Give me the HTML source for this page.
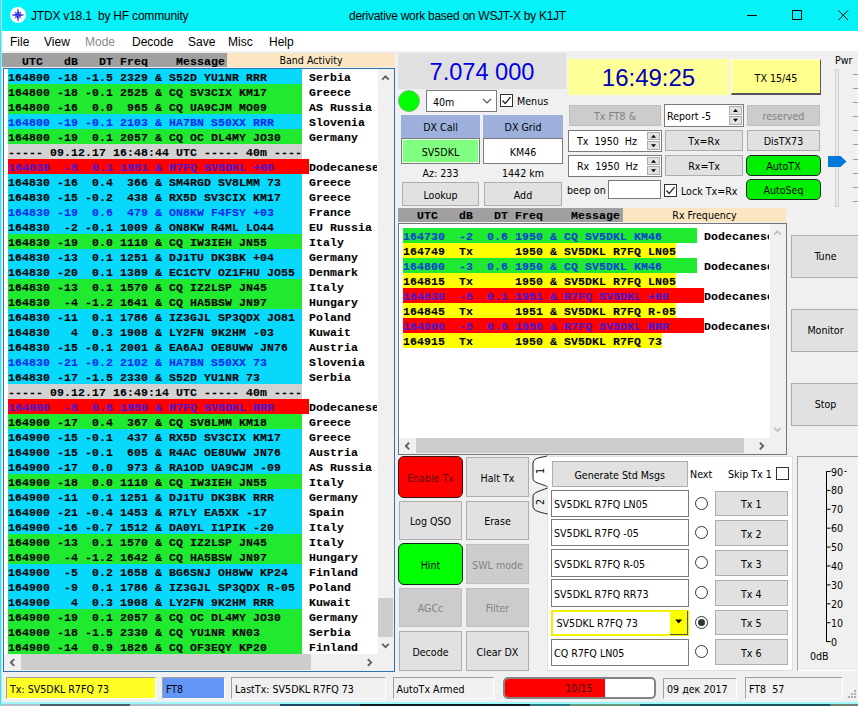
<!DOCTYPE html><html><head><meta charset="utf-8"><title>JTDX v18.1 by HF community</title><style>
*{box-sizing:border-box}
html,body{margin:0;padding:0}
body{width:858px;height:706px;overflow:hidden;position:relative;background:#8fb6c2;font-family:"DejaVu Sans Condensed","Liberation Sans",sans-serif;font-size:10.6px;color:#000}
.a{position:absolute}
.win{left:2px;top:0;width:860px;height:704px;background:#f0f0f0;border-bottom:2px solid #9cf8fa}
.tb{left:1px;top:0;width:857px;height:31px;background:#04f2f8}
.seg{font-family:"Liberation Sans",sans-serif;font-size:12px;white-space:pre}
.mono{font-family:"Liberation Mono","DejaVu Sans Mono",monospace;font-weight:bold;font-size:11.5px;letter-spacing:0.1px;white-space:pre;line-height:15px;-webkit-text-stroke:0.1px}
.mono .r{position:absolute;height:15px;line-height:17px;overflow:hidden}
.btn{background:#e1e1e1;border:1px solid #adadad;text-align:center;white-space:pre;padding-top:2px}
.dis{background:#cccccc;border:1px solid #bfbfbf;color:#838383;text-align:center;white-space:pre;padding-top:2px}
.ed{background:#fff;border:1px solid #7a7a7a;white-space:pre;padding-top:1.5px}
.cbt{padding-top:2px;white-space:pre}
.c{display:flex;align-items:center;justify-content:center}
.l{display:flex;align-items:center}
.cb{background:#fff;border:1px solid #333;width:13px;height:13px}
.rad{width:13px;height:13px;border:1px solid #333;border-radius:50%;background:#fff}
.sunk{border:1px solid;border-color:#a0a0a0 #fff #fff #a0a0a0;white-space:pre;padding-top:2px}
.t{white-space:pre}
</style></head><body>
<div class="a" style="left:0px;top:704px;width:40px;height:2px;background:#b4c0cc"></div>
<div class="a" style="left:40px;top:704px;width:90px;height:2px;background:#4a5a6a"></div>
<div class="a" style="left:130px;top:704px;width:150px;height:2px;background:#b0bcc8"></div>
<div class="a" style="left:280px;top:704px;width:80px;height:2px;background:#204868"></div>
<div class="a" style="left:360px;top:704px;width:170px;height:2px;background:#101820"></div>
<div class="a" style="left:530px;top:704px;width:40px;height:2px;background:#2a7a80"></div>
<div class="a" style="left:570px;top:704px;width:70px;height:2px;background:#6a9a80"></div>
<div class="a" style="left:640px;top:704px;width:190px;height:2px;background:#1a5060"></div>
<div class="a" style="left:830px;top:704px;width:28px;height:2px;background:#708070"></div>
<div class="a win"></div>
<div class="a tb"></div>
<svg class="a" style="left:10px;top:6.7px" width="16" height="16" viewBox="0 0 16 16"><circle cx="8" cy="8" r="8" fill="#fff"/><path d="M4.3 4.6 L8 6.2 L11.7 4.6 L9.8 8 L11.7 11.4 L8 9.8 L4.3 11.4 L6.2 8 Z" fill="#4a4af2"/><path d="M8 1.3 L9.3 6.7 L14.8 8 L9.3 9.3 L8 15 L6.7 9.3 L1.2 8 L6.7 6.7 Z" fill="#2424d6"/><path d="M8 1.3 L8 8 L6.7 6.7 Z M14.8 8 L8 8 L9.3 6.7 Z M8 15 L8 8 L9.3 9.3 Z M1.2 8 L8 8 L6.7 9.3 Z" fill="#5a5af6"/></svg>
<div class="a seg" style="left:31px;top:9px;line-height:14px;letter-spacing:-0.2px">JTDX v18.1  by HF community</div>
<div class="a seg" style="left:349px;top:9px;line-height:14px;letter-spacing:-0.27px">derivative work based on WSJT-X by K1JT</div>
<svg class="a" style="left:740px;top:0" width="118" height="31" viewBox="0 0 118 31"><g stroke="#000" stroke-width="1" fill="none"><path d="M7 15.5 H17"/><rect x="52.5" y="10.5" width="9" height="9"/><path d="M98.5 10.5 L108 20 M108 10.5 L98.5 20"/></g></svg>
<div class="a" style="left:2px;top:31px;width:856px;height:20px;background:#fff"></div>
<div class="a seg" style="left:10px;top:35px;line-height:14px;color:#000">File</div>
<div class="a seg" style="left:44px;top:35px;line-height:14px;color:#000">View</div>
<div class="a seg" style="left:85px;top:35px;line-height:14px;color:#8a8a8a">Mode</div>
<div class="a seg" style="left:132px;top:35px;line-height:14px;color:#000">Decode</div>
<div class="a seg" style="left:188px;top:35px;line-height:14px;color:#000">Save</div>
<div class="a seg" style="left:228px;top:35px;line-height:14px;color:#000">Misc</div>
<div class="a seg" style="left:269px;top:35px;line-height:14px;color:#000">Help</div>
<div class="a" style="left:2px;top:53px;width:225px;height:14px;background:#a0a0a0"></div>
<div class="a c" style="left:227px;top:53px;width:168px;height:14px;background:#fce6c2">Band Activity</div>
<div class="a mono" style="left:8px;top:53px;height:14px;line-height:17px;overflow:hidden">  UTC   dB   DT Freq    Message</div>
<div class="a" style="left:3px;top:68px;width:392px;height:604px;background:#fff;border:1px solid #2f72b4"></div>
<div class="a mono" style="left:8px;top:69px;width:369px;height:585px;overflow:hidden">
<div class="r" style="left:0;top:0px;width:294px;background:#08d8fc;color:#000">164800 -18 -1.5 2329 &amp; S52D YU1NR RRR</div>
<div class="r" style="left:301px;top:0px">Serbia</div>
<div class="r" style="left:0;top:15px;width:294px;background:#20ea30;color:#000">164800 -18 -0.1 2525 &amp; CQ SV3CIX KM17</div>
<div class="r" style="left:301px;top:15px">Greece</div>
<div class="r" style="left:0;top:30px;width:294px;background:#20ea30;color:#000">164800 -16  0.0  965 &amp; CQ UA9CJM MO09</div>
<div class="r" style="left:301px;top:30px">AS Russia</div>
<div class="r" style="left:0;top:45px;width:294px;background:#08d8fc;color:#0a28f0">164800 -19 -0.1 2103 &amp; HA7BN S50XX RRR</div>
<div class="r" style="left:301px;top:45px">Slovenia</div>
<div class="r" style="left:0;top:60px;width:294px;background:#20ea30;color:#000">164800 -19  0.1 2057 &amp; CQ OC DL4MY JO30</div>
<div class="r" style="left:301px;top:60px">Germany</div>
<div class="r" style="left:0;top:75px;width:294px;background:#d2d2d2;color:#000">----- 09.12.17 16:48:44 UTC ----- 40m ----</div>
<div class="r" style="left:0;top:90px;width:301px;background:#ff0000;color:#4818d2">164830  -5  0.1 1951 &amp; R7FQ SV5DKL +00</div>
<div class="r" style="left:301px;top:90px">Dodecanese</div>
<div class="r" style="left:0;top:105px;width:294px;background:#08d8fc;color:#000">164830 -16  0.4  366 &amp; SM4RGD SV8LMM 73</div>
<div class="r" style="left:301px;top:105px">Greece</div>
<div class="r" style="left:0;top:120px;width:294px;background:#08d8fc;color:#000">164830 -15 -0.2  438 &amp; RX5D SV3CIX KM17</div>
<div class="r" style="left:301px;top:120px">Greece</div>
<div class="r" style="left:0;top:135px;width:294px;background:#08d8fc;color:#0a28f0">164830 -19  0.6  479 &amp; ON8KW F4FSY +03</div>
<div class="r" style="left:301px;top:135px">France</div>
<div class="r" style="left:0;top:150px;width:294px;background:#08d8fc;color:#000">164830  -2 -0.1 1009 &amp; ON8KW R4ML LO44</div>
<div class="r" style="left:301px;top:150px">EU Russia</div>
<div class="r" style="left:0;top:165px;width:294px;background:#20ea30;color:#000">164830 -19  0.0 1110 &amp; CQ IW3IEH JN55</div>
<div class="r" style="left:301px;top:165px">Italy</div>
<div class="r" style="left:0;top:180px;width:294px;background:#08d8fc;color:#000">164830 -13  0.1 1251 &amp; DJ1TU DK3BK +04</div>
<div class="r" style="left:301px;top:180px">Germany</div>
<div class="r" style="left:0;top:195px;width:294px;background:#08d8fc;color:#000">164830 -20  0.1 1389 &amp; EC1CTV OZ1FHU JO55</div>
<div class="r" style="left:301px;top:195px">Denmark</div>
<div class="r" style="left:0;top:210px;width:294px;background:#20ea30;color:#000">164830 -13  0.1 1570 &amp; CQ IZ2LSP JN45</div>
<div class="r" style="left:301px;top:210px">Italy</div>
<div class="r" style="left:0;top:225px;width:294px;background:#20ea30;color:#000">164830  -4 -1.2 1641 &amp; CQ HA5BSW JN97</div>
<div class="r" style="left:301px;top:225px">Hungary</div>
<div class="r" style="left:0;top:240px;width:294px;background:#08d8fc;color:#000">164830 -11  0.1 1786 &amp; IZ3GJL SP3QDX JO81</div>
<div class="r" style="left:301px;top:240px">Poland</div>
<div class="r" style="left:0;top:255px;width:294px;background:#08d8fc;color:#000">164830   4  0.3 1908 &amp; LY2FN 9K2HM -03</div>
<div class="r" style="left:301px;top:255px">Kuwait</div>
<div class="r" style="left:0;top:270px;width:294px;background:#08d8fc;color:#000">164830 -15 -0.1 2001 &amp; EA6AJ OE8UWW JN76</div>
<div class="r" style="left:301px;top:270px">Austria</div>
<div class="r" style="left:0;top:285px;width:294px;background:#08d8fc;color:#0a28f0">164830 -21 -0.2 2102 &amp; HA7BN S50XX 73</div>
<div class="r" style="left:301px;top:285px">Slovenia</div>
<div class="r" style="left:0;top:300px;width:294px;background:#08d8fc;color:#000">164830 -17 -1.5 2330 &amp; S52D YU1NR 73</div>
<div class="r" style="left:301px;top:300px">Serbia</div>
<div class="r" style="left:0;top:315px;width:294px;background:#d2d2d2;color:#000">----- 09.12.17 16:49:14 UTC ----- 40m ----</div>
<div class="r" style="left:0;top:330px;width:301px;background:#ff0000;color:#4818d2">164900  -5  0.6 1950 &amp; R7FQ SV5DKL RRR</div>
<div class="r" style="left:301px;top:330px">Dodecanese</div>
<div class="r" style="left:0;top:345px;width:294px;background:#20ea30;color:#000">164900 -17  0.4  367 &amp; CQ SV8LMM KM18</div>
<div class="r" style="left:301px;top:345px">Greece</div>
<div class="r" style="left:0;top:360px;width:294px;background:#08d8fc;color:#000">164900 -15 -0.1  437 &amp; RX5D SV3CIX KM17</div>
<div class="r" style="left:301px;top:360px">Greece</div>
<div class="r" style="left:0;top:375px;width:294px;background:#08d8fc;color:#000">164900 -15 -0.1  605 &amp; R4AC OE8UWW JN76</div>
<div class="r" style="left:301px;top:375px">Austria</div>
<div class="r" style="left:0;top:390px;width:294px;background:#08d8fc;color:#000">164900 -17  0.0  973 &amp; RA1OD UA9CJM -09</div>
<div class="r" style="left:301px;top:390px">AS Russia</div>
<div class="r" style="left:0;top:405px;width:294px;background:#20ea30;color:#000">164900 -18  0.0 1110 &amp; CQ IW3IEH JN55</div>
<div class="r" style="left:301px;top:405px">Italy</div>
<div class="r" style="left:0;top:420px;width:294px;background:#08d8fc;color:#000">164900 -11  0.1 1251 &amp; DJ1TU DK3BK RRR</div>
<div class="r" style="left:301px;top:420px">Germany</div>
<div class="r" style="left:0;top:435px;width:294px;background:#08d8fc;color:#000">164900 -21 -0.4 1453 &amp; R7LY EA5XK -17</div>
<div class="r" style="left:301px;top:435px">Spain</div>
<div class="r" style="left:0;top:450px;width:294px;background:#08d8fc;color:#000">164900 -16 -0.7 1512 &amp; DA0YL I1PIK -20</div>
<div class="r" style="left:301px;top:450px">Italy</div>
<div class="r" style="left:0;top:465px;width:294px;background:#20ea30;color:#000">164900 -13  0.1 1570 &amp; CQ IZ2LSP JN45</div>
<div class="r" style="left:301px;top:465px">Italy</div>
<div class="r" style="left:0;top:480px;width:294px;background:#20ea30;color:#000">164900  -4 -1.2 1642 &amp; CQ HA5BSW JN97</div>
<div class="r" style="left:301px;top:480px">Hungary</div>
<div class="r" style="left:0;top:495px;width:294px;background:#08d8fc;color:#000">164900  -5  0.2 1658 &amp; BG6SNJ OH8WW KP24</div>
<div class="r" style="left:301px;top:495px">Finland</div>
<div class="r" style="left:0;top:510px;width:294px;background:#08d8fc;color:#000">164900  -9  0.1 1786 &amp; IZ3GJL SP3QDX R-05</div>
<div class="r" style="left:301px;top:510px">Poland</div>
<div class="r" style="left:0;top:525px;width:294px;background:#08d8fc;color:#000">164900   4  0.3 1908 &amp; LY2FN 9K2HM RRR</div>
<div class="r" style="left:301px;top:525px">Kuwait</div>
<div class="r" style="left:0;top:540px;width:294px;background:#20ea30;color:#000">164900 -19  0.1 2057 &amp; CQ OC DL4MY JO30</div>
<div class="r" style="left:301px;top:540px">Germany</div>
<div class="r" style="left:0;top:555px;width:294px;background:#20ea30;color:#000">164900 -18 -1.5 2330 &amp; CQ YU1NR KN03</div>
<div class="r" style="left:301px;top:555px">Serbia</div>
<div class="r" style="left:0;top:570px;width:294px;background:#20ea30;color:#000">164900 -14  0.9 1826 &amp; CQ OF3EQY KP20</div>
<div class="r" style="left:301px;top:570px">Finland</div>
</div>
<div class="a" style="left:378px;top:69px;width:16px;height:602px;background:#f0f0f0"></div>
<div class="a" style="left:4px;top:654px;width:390px;height:17px;background:#f0f0f0"></div>
<div class="a" style="left:378px;top:598px;width:15px;height:39px;background:#cdcdcd"></div>
<div class="a" style="left:21px;top:654px;width:290px;height:16px;background:#cdcdcd"></div>
<svg class="a" style="left:0;top:0" width="858" height="706"><path d="M382.2 79.65 L385.5 76.35 L388.8 79.65" stroke="#606060" stroke-width="1.9" fill="none"/><path d="M382.2 643.85 L385.5 647.15 L388.8 643.85" stroke="#606060" stroke-width="1.9" fill="none"/><path d="M14.15 659.2 L10.85 662.5 L14.15 665.8" stroke="#606060" stroke-width="1.9" fill="none"/><path d="M367.85 659.2 L371.15 662.5 L367.85 665.8" stroke="#606060" stroke-width="1.9" fill="none"/></svg>
<div class="a c" style="left:398px;top:53px;width:168px;height:36px;background:#e0e0e0;color:#0000e0;font-family:'Liberation Sans',sans-serif;font-size:23.6px;padding-top:2px">7.074 000</div>
<div class="a" style="left:398px;top:90px;width:22px;height:22px;border-radius:50%;background:#00ff00;border:1px solid #7ab87a"></div>
<div class="a ed l" style="left:426px;top:90px;width:71px;height:22px;padding-left:6px;border-color:#7a7a7a">40m</div>
<svg class="a" style="left:480px;top:94px" width="14" height="14"><path d="M3 5.0 L7 9.0 L11 5.0" stroke="#555" stroke-width="1.2" fill="none"/></svg>
<div class="a cb" style="left:500px;top:94px"></div>
<svg class="a" style="left:500px;top:94px" width="13" height="13"><path d="M2.5 6.5 L5.2 9.4 L10.5 3.2" stroke="#222" stroke-width="1.3" fill="none"/></svg>
<div class="a l t" style="left:517px;top:94px;height:13px">Menus</div>
<div class="a c" style="left:401px;top:115px;width:79px;height:23px;background:#9db0dc">DX Call</div>
<div class="a c" style="left:483px;top:115px;width:80px;height:23px;background:#9db0dc">DX Grid</div>
<div class="a ed c" style="left:401px;top:138px;width:79px;height:25.5px;background:#80ff80;box-shadow:inset 0 0 0 1px #e8ffe8">SV5DKL</div>
<div class="a ed c" style="left:483px;top:138px;width:80px;height:25.5px">KM46</div>
<div class="a c" style="left:401px;top:165.5px;width:79px;height:15px">Az: 233</div>
<div class="a c" style="left:483px;top:165.5px;width:80px;height:15px">1442 km</div>
<div class="a btn c" style="left:402px;top:182px;width:77px;height:23.5px">Lookup</div>
<div class="a btn c" style="left:484px;top:182px;width:78px;height:23.5px">Add</div>
<div class="a c" style="left:568px;top:59px;width:161px;height:36px;background:#ffff99;color:#0000b4;font-family:'Liberation Sans',sans-serif;font-size:24px;padding-top:2px">16:49:25</div>
<div class="a c" style="left:731px;top:59px;width:90px;height:36px;background:#ffff8e;border:1px solid;border-color:#ffffe0 #555 #555 #ffffe0;border-bottom-width:2px;padding-top:3px">TX 15/45</div>
<div class="a dis c" style="left:569px;top:105px;width:92px;height:21px;padding-top:0">Tx FT8 &amp;</div>
<div class="a ed l" style="left:664px;top:104px;width:79.5px;height:22.5px;padding-left:2px">Report -5</div>
<div class="a" style="left:728.5px;top:106px;width:13px;height:8.75px;background:#e1e1e1;border:1px solid #adadad"></div>
<div class="a" style="left:728.5px;top:115.75px;width:13px;height:8.75px;background:#e1e1e1;border:1px solid #adadad"></div>
<svg class="a" style="left:728.5px;top:104px" width="13" height="22.5"><path d="M4 7.875 L6.5 4.875 L9 7.875 Z M4 14.625 L6.5 17.625 L9 14.625 Z" fill="#000"/></svg>
<div class="a dis c" style="left:747px;top:105px;width:73px;height:21px;padding-top:0">reserved</div>
<div class="a ed l" style="left:568px;top:129.5px;width:93.5px;height:22px;padding-left:8px">Tx  1950  Hz</div>
<div class="a" style="left:646.5px;top:131.5px;width:13px;height:8.5px;background:#e1e1e1;border:1px solid #adadad"></div>
<div class="a" style="left:646.5px;top:141.0px;width:13px;height:8.5px;background:#e1e1e1;border:1px solid #adadad"></div>
<svg class="a" style="left:646.5px;top:129.5px" width="13" height="22"><path d="M4 7.75 L6.5 4.75 L9 7.75 Z M4 14.25 L6.5 17.25 L9 14.25 Z" fill="#000"/></svg>
<div class="a ed l" style="left:568px;top:154.5px;width:93.5px;height:22px;padding-left:8px">Rx  1950  Hz</div>
<div class="a" style="left:646.5px;top:156.5px;width:13px;height:8.5px;background:#e1e1e1;border:1px solid #adadad"></div>
<div class="a" style="left:646.5px;top:166.0px;width:13px;height:8.5px;background:#e1e1e1;border:1px solid #adadad"></div>
<svg class="a" style="left:646.5px;top:154.5px" width="13" height="22"><path d="M4 7.75 L6.5 4.75 L9 7.75 Z M4 14.25 L6.5 17.25 L9 14.25 Z" fill="#000"/></svg>
<div class="a btn c" style="left:665px;top:130px;width:78px;height:20.5px">Tx=Rx</div>
<div class="a btn c" style="left:665px;top:155px;width:78px;height:20.5px">Rx=Tx</div>
<div class="a btn c" style="left:747px;top:130px;width:73px;height:20.5px">DisTX73</div>
<div class="a c t" style="left:746px;top:155px;width:75px;height:21px;background:#00f000;border:1.3px solid #1a2a1a;border-radius:5px">AutoTX</div>
<div class="a c t" style="left:746px;top:179px;width:75px;height:21px;background:#00f000;border:1.3px solid #1a2a1a;border-radius:5px">AutoSeq</div>
<div class="a l t" style="left:567px;top:182px;height:16px">beep on</div>
<div class="a ed" style="left:608px;top:179.5px;width:53px;height:19px"></div>
<div class="a cb" style="left:664px;top:184px"></div>
<svg class="a" style="left:664px;top:184px" width="13" height="13"><path d="M2.5 6.5 L5.2 9.4 L10.5 3.2" stroke="#222" stroke-width="1.3" fill="none"/></svg>
<div class="a l t" style="left:681px;top:184px;height:13px">Lock Tx=Rx</div>
<div class="a t" style="left:835px;top:54px;line-height:13px">Pwr</div>
<div class="a" style="left:835px;top:69px;width:4px;height:138px;background:#e7eaea;border:1px solid #d0d0d0"></div>
<svg class="a" style="left:826px;top:154px" width="24" height="16"><path d="M2 2 H14.5 L20.5 7.5 L14.5 13 H2 Z" fill="#0078d7"/></svg>
<svg class="a" style="left:0;top:0" width="858" height="220"><rect x="853" y="74" width="5" height="1" fill="#9c9c9c"/><rect x="853" y="88" width="5" height="1" fill="#9c9c9c"/><rect x="853" y="102" width="5" height="1" fill="#9c9c9c"/><rect x="853" y="116" width="5" height="1" fill="#9c9c9c"/><rect x="853" y="130" width="5" height="1" fill="#9c9c9c"/><rect x="853" y="144" width="5" height="1" fill="#9c9c9c"/><rect x="853" y="159" width="5" height="1" fill="#9c9c9c"/><rect x="853" y="173" width="5" height="1" fill="#9c9c9c"/><rect x="853" y="187" width="5" height="1" fill="#9c9c9c"/><rect x="853" y="201" width="5" height="1" fill="#9c9c9c"/></svg>
<div class="a" style="left:398px;top:208px;width:225px;height:14px;background:#a0a0a0"></div>
<div class="a c" style="left:623px;top:208px;width:163px;height:14px;background:#fce6c2">Rx Frequency</div>
<div class="a mono" style="left:403px;top:208px;height:14px;line-height:16px;overflow:hidden">  UTC   dB   DT Freq    Message</div>
<div class="a" style="left:398px;top:223px;width:389px;height:232px;background:#fff;border:1px solid #757575"></div>
<div class="a mono" style="left:403px;top:228px;width:366px;height:120px;overflow:hidden">
<div class="r" style="left:0;top:0px;width:294px;background:#20ea30;color:#0a40d8">164730  -2  0.6 1950 &amp; CQ SV5DKL KM46</div>
<div class="r" style="left:301px;top:0px">Dodecanese</div>
<div class="r" style="left:0;top:15px;width:273px;background:#ffff00;color:#000">164749  Tx      1950 &amp; SV5DKL R7FQ LN05</div>
<div class="r" style="left:0;top:30px;width:294px;background:#20ea30;color:#0a40d8">164800  -3  0.6 1950 &amp; CQ SV5DKL KM46</div>
<div class="r" style="left:301px;top:30px">Dodecanese</div>
<div class="r" style="left:0;top:45px;width:273px;background:#ffff00;color:#000">164815  Tx      1950 &amp; SV5DKL R7FQ LN05</div>
<div class="r" style="left:0;top:60px;width:301px;background:#ff0000;color:#4818d2">164830  -5  0.1 1951 &amp; R7FQ SV5DKL +00</div>
<div class="r" style="left:301px;top:60px">Dodecanese</div>
<div class="r" style="left:0;top:75px;width:273px;background:#ffff00;color:#000">164845  Tx      1951 &amp; SV5DKL R7FQ R-05</div>
<div class="r" style="left:0;top:90px;width:301px;background:#ff0000;color:#4818d2">164900  -5  0.6 1950 &amp; R7FQ SV5DKL RRR</div>
<div class="r" style="left:301px;top:90px">Dodecanese</div>
<div class="r" style="left:0;top:105px;width:259px;background:#ffff00;color:#000">164915  Tx      1950 &amp; SV5DKL R7FQ 73</div>
</div>
<div class="a" style="left:770px;top:224px;width:16px;height:230px;background:#f0f0f0"></div>
<div class="a" style="left:399px;top:438px;width:387px;height:16px;background:#f0f0f0"></div>
<div class="a" style="left:416px;top:438px;width:328px;height:15px;background:#cdcdcd"></div>
<svg class="a" style="left:0;top:0" width="858" height="706"><path d="M774.2 234.65 L777.5 231.35 L780.8 234.65" stroke="#c0c0c0" stroke-width="1.9" fill="none"/><path d="M774.2 427.85 L777.5 431.15 L780.8 427.85" stroke="#c0c0c0" stroke-width="1.9" fill="none"/><path d="M409.15 442.7 L405.85 446.0 L409.15 449.3" stroke="#606060" stroke-width="1.9" fill="none"/><path d="M759.85 442.7 L763.15 446.0 L759.85 449.3" stroke="#606060" stroke-width="1.9" fill="none"/></svg>
<div class="a btn c" style="left:791px;top:235px;width:69px;height:42.5px;padding-top:0">Tune</div>
<div class="a btn c" style="left:791px;top:309px;width:69px;height:42.5px;padding-top:0">Monitor</div>
<div class="a btn c" style="left:791px;top:383px;width:69px;height:42.5px;padding-top:0">Stop</div>
<div class="a c cbt" style="left:398px;top:455.5px;width:65px;height:42.5px;background:#ff0000;border:1.3px solid #3a1010;border-radius:6px;color:#5a0808">Enable Tx</div>
<div class="a btn c" style="left:466px;top:457px;width:63px;height:39.5px">Halt Tx</div>
<div class="a btn c" style="left:399px;top:501px;width:63px;height:38.5px">Log QSO</div>
<div class="a btn c" style="left:466px;top:501px;width:63px;height:38.5px">Erase</div>
<div class="a c cbt" style="left:398px;top:543px;width:65px;height:42px;background:#00ff00;border:1.3px solid #102a10;border-radius:6px">Hint</div>
<div class="a dis c" style="left:466px;top:544px;width:63px;height:39.5px">SWL mode</div>
<div class="a dis c" style="left:399px;top:588px;width:63px;height:38.5px">AGCc</div>
<div class="a dis c" style="left:466px;top:588px;width:63px;height:38.5px">Filter</div>
<div class="a btn c" style="left:399px;top:631px;width:63px;height:39.5px">Decode</div>
<div class="a btn c" style="left:466px;top:631px;width:63px;height:39.5px">Clear DX</div>
<div class="a" style="left:547px;top:456px;width:246px;height:214.5px;background:#fff;border:1px solid #e0e0e0"></div>
<svg class="a" style="left:530px;top:452px" width="20" height="66" viewBox="0 0 20 66"><path d="M17.5 4 C8 6 3 6 3 12 V26 C3 31 9 31 17.5 34.5 V4 Z" fill="#fff" stroke="#222" stroke-width="1"/><path d="M17.5 36 C9 39.5 3 40 3 45 V54 C3 59 9 60 17.5 62" fill="#f0f0f0" stroke="#222" stroke-width="1"/><path d="M17.5 4 V34.5" stroke="#fff" stroke-width="1.5"/></svg>
<div class="a t" style="left:533px;top:465px;width:14px;height:12px;line-height:12px;transform:rotate(-90deg);text-align:center">1</div>
<div class="a t" style="left:533px;top:496px;width:14px;height:12px;line-height:12px;transform:rotate(-90deg);text-align:center">2</div>
<div class="a btn c" style="left:552px;top:461px;width:135.5px;height:25.5px">Generate Std Msgs</div>
<div class="a l t" style="left:690px;top:467px;height:14px">Next</div>
<div class="a l t" style="left:728px;top:467px;height:14px">Skip Tx 1</div>
<div class="a cb" style="left:776px;top:467px"></div>
<div class="a ed l" style="left:551px;top:490px;width:137.5px;height:26.5px;padding-left:2px">SV5DKL R7FQ LN05</div>
<div class="a rad" style="left:695.0px;top:496.8px"></div>
<div class="a btn c" style="left:715px;top:491px;width:72.5px;height:24.5px">Tx 1</div>
<div class="a ed l" style="left:551px;top:519px;width:137.5px;height:27.299999999999955px;padding-left:2px">SV5DKL R7FQ -05</div>
<div class="a rad" style="left:695.0px;top:525.8px"></div>
<div class="a btn c" style="left:715px;top:520px;width:72.5px;height:25.5px">Tx 2</div>
<div class="a ed l" style="left:551px;top:549px;width:137.5px;height:27.600000000000023px;padding-left:2px">SV5DKL R7FQ R-05</div>
<div class="a rad" style="left:695.0px;top:555.8px"></div>
<div class="a btn c" style="left:715px;top:550px;width:72.5px;height:25.700000000000045px">Tx 3</div>
<div class="a ed l" style="left:551px;top:579px;width:137.5px;height:27.600000000000023px;padding-left:2px">SV5DKL R7FQ RR73</div>
<div class="a rad" style="left:695.0px;top:585.8px"></div>
<div class="a btn c" style="left:715px;top:580px;width:72.5px;height:26px">Tx 4</div>
<div class="a l t" style="left:551px;top:610px;width:137.5px;height:25.5px;background:#fff;border:2px solid #f2f200;padding-left:3.5px">SV5DKL R7FQ 73</div>
<div class="a" style="left:670px;top:611px;width:17.5px;height:23.5px;background:#ffff00;border-right:1px solid #55552a;border-bottom:1px solid #55552a"></div>
<svg class="a" style="left:670px;top:610px" width="18" height="25"><path d="M5.2 9.5 H12.2 L8.7 13.5 Z" fill="#000"/></svg>
<div class="a rad" style="left:695.0px;top:615.8px"></div>
<div class="a" style="left:698.0px;top:618.8px;width:7px;height:7px;border-radius:50%;background:#333"></div>
<div class="a btn c" style="left:715px;top:610px;width:72.5px;height:24.5px">Tx 5</div>
<div class="a ed l" style="left:551px;top:638.5px;width:137.5px;height:27.100000000000023px;padding-left:2px">CQ R7FQ LN05</div>
<div class="a rad" style="left:695.0px;top:645.3px"></div>
<div class="a btn c" style="left:715px;top:639px;width:72.5px;height:25.5px">Tx 6</div>
<div class="a" style="left:797px;top:456px;width:63px;height:215px;background:#f0f0f0;border:1px solid;border-color:#a0a0a0 #fff #fff #a0a0a0"></div>
<svg class="a" style="left:0;top:0;font-family:'DejaVu Sans Condensed','Liberation Sans',sans-serif" width="858" height="706"><path d="M830.5 471.5 H826.5 V641.5 H830.5" stroke="#000" fill="none" stroke-width="1"/><path d="M826.5 471.5 H830.5" stroke="#000" stroke-width="1"/><text x="831" y="475.5" font-size="10.6">90</text><path d="M826.5 490.4 H830.5" stroke="#000" stroke-width="1"/><text x="831" y="494.4" font-size="10.6">80</text><path d="M826.5 509.3 H830.5" stroke="#000" stroke-width="1"/><text x="831" y="513.3" font-size="10.6">70</text><path d="M826.5 528.2 H830.5" stroke="#000" stroke-width="1"/><text x="831" y="532.2" font-size="10.6">60</text><path d="M826.5 547.1 H830.5" stroke="#000" stroke-width="1"/><text x="831" y="551.1" font-size="10.6">50</text><path d="M826.5 566.0 H830.5" stroke="#000" stroke-width="1"/><text x="831" y="570.0" font-size="10.6">40</text><path d="M826.5 584.9 H830.5" stroke="#000" stroke-width="1"/><text x="831" y="588.9" font-size="10.6">30</text><path d="M826.5 603.8 H830.5" stroke="#000" stroke-width="1"/><text x="831" y="607.8" font-size="10.6">20</text><path d="M826.5 622.7 H830.5" stroke="#000" stroke-width="1"/><text x="831" y="626.7" font-size="10.6">10</text><path d="M826.5 641.6 H830.5" stroke="#000" stroke-width="1"/><text x="831" y="645.6" font-size="10.6">0</text><path d="M844.5 471.5 H846.5" stroke="#000" stroke-width="1"/><text x="810" y="660" font-size="10.6">0dB</text></svg>
<div class="a sunk l" style="left:6px;top:677px;width:149.5px;height:21.5px;background:#ffff26;padding-left:3px">Tx: SV5DKL R7FQ 73</div>
<div class="a sunk l" style="left:162px;top:677px;width:62.5px;height:21.5px;background:#6496f8;padding-left:3px">FT8</div>
<div class="a sunk l" style="left:230.5px;top:677px;width:155px;height:21.5px;padding-left:3.5px">LastTx: SV5DKL R7FQ 73</div>
<div class="a sunk l" style="left:392.5px;top:677px;width:101.5px;height:21.5px;padding-left:3px">AutoTx Armed</div>
<div class="a" style="left:502.5px;top:677px;width:153px;height:22px;background:#fff;border:2px solid #848484;border-radius:5px;overflow:hidden"><div style="width:100.5px;height:100%;background:#ff0000"></div></div>
<div class="a c t" style="left:502.5px;top:677px;width:153px;height:22px;color:#3a0000">10/15</div>
<div class="a sunk l" style="left:663px;top:678px;width:73.5px;height:20.5px;padding-left:3px">09 дек 2017</div>
<div class="a sunk l" style="left:744.5px;top:677px;width:98.5px;height:21.5px;padding-left:3.5px">FT8  57</div>
<svg class="a" style="left:846px;top:688px" width="12" height="12"><g fill="#b0b0b0"><rect x="8" y="2" width="2" height="2"/><rect x="5" y="5" width="2" height="2"/><rect x="8" y="5" width="2" height="2"/><rect x="2" y="8" width="2" height="2"/><rect x="5" y="8" width="2" height="2"/><rect x="8" y="8" width="2" height="2"/></g></svg>
<div class="a" style="left:0;top:0;width:2px;height:706px;background:linear-gradient(to right,#62cfe0 50%,#8cf8fa 50%)"></div>
</body></html>
